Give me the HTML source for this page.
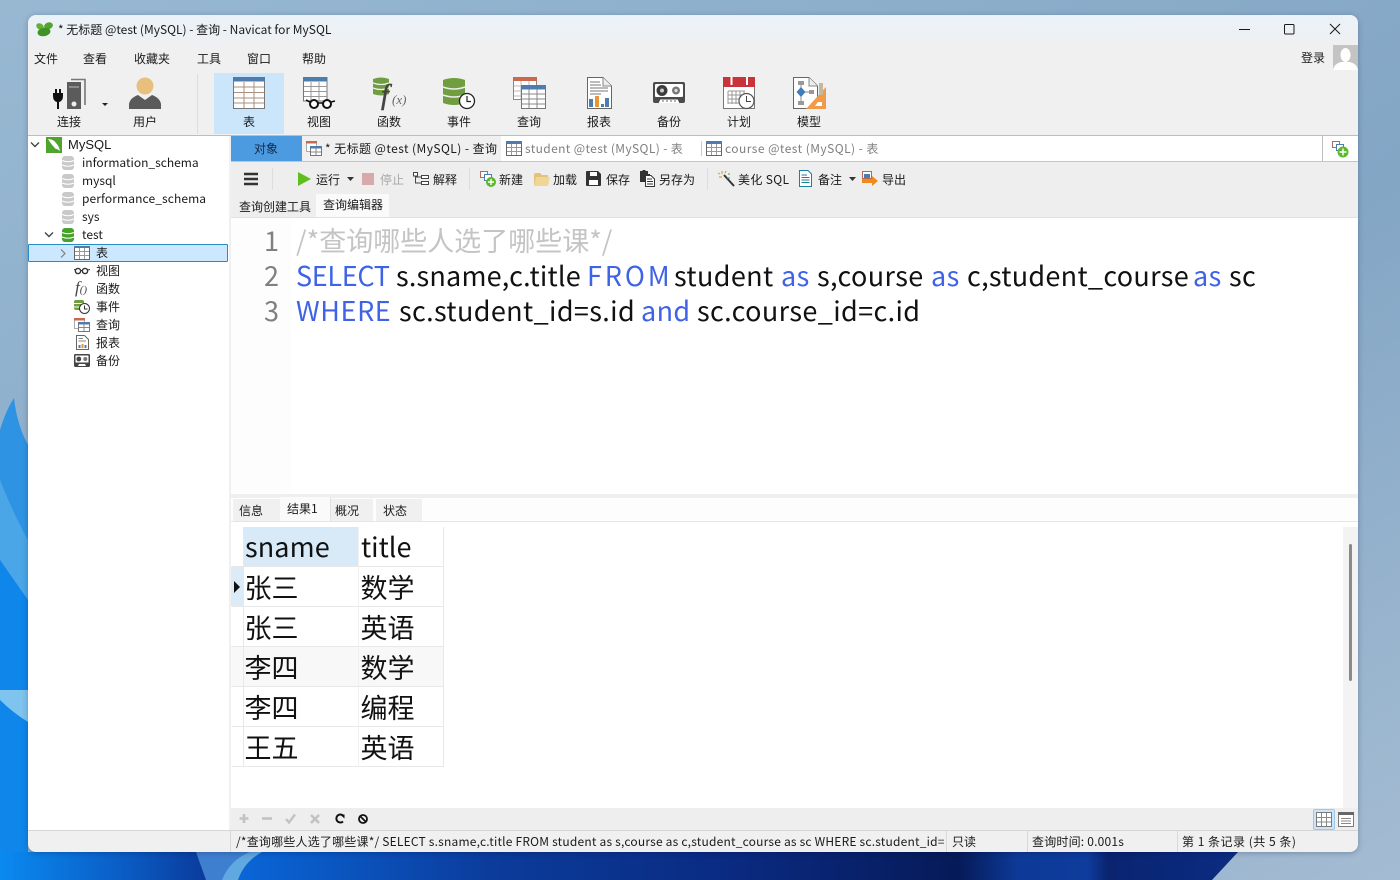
<!DOCTYPE html>
<html><head><meta charset="utf-8"><title>Navicat for MySQL</title>
<style>
html,body{margin:0;padding:0;width:1400px;height:880px;overflow:hidden}
body{position:relative;background:#8fb0cc;font-family:"Liberation Sans","Noto Sans CJK SC",sans-serif;color:#111}
.a{position:absolute}
.t{position:absolute;white-space:nowrap;font-size:12px;line-height:16px;font-family:"Noto Sans CJK SC","Liberation Sans",sans-serif;color:#1a1a1a}
.c{transform:translateX(-50%)}
svg{position:absolute;overflow:visible}
.code{position:absolute;white-space:pre;font-family:"Noto Sans CJK SC",sans-serif;font-size:27px;line-height:35px;color:#111;letter-spacing:.37px}
.k{color:#3f63e6}
.l2{top:257px}
.l3{top:292px}
.n{position:absolute;font-family:"Noto Sans CJK SC",sans-serif;font-size:27px;line-height:35px;color:#808080}
.g{position:absolute;font-family:"Noto Sans CJK SC",sans-serif;font-size:27px;line-height:40px;color:#111;white-space:nowrap}
</style></head><body>
<!-- wallpaper -->
<svg style="left:0;top:0" width="1400" height="880" viewBox="0 0 1400 880">
<defs>
<linearGradient id="bg" x1="0" y1="0" x2="1" y2="1"><stop offset="0" stop-color="#98b8d2"/><stop offset=".6" stop-color="#83a6c5"/><stop offset="1" stop-color="#a4bcd3"/></linearGradient>
<linearGradient id="bl" x1="0" y1="0" x2="1" y2="0"><stop offset="0" stop-color="#0a8af0"/><stop offset=".6" stop-color="#0a5cc4"/><stop offset="1" stop-color="#0a3a9a"/></linearGradient>
<linearGradient id="st" x1="0" y1="0" x2="1" y2="0"><stop offset="0" stop-color="#0a66d8"/><stop offset=".25" stop-color="#0b3c9c"/><stop offset=".5" stop-color="#0a2a80"/><stop offset=".72" stop-color="#061a58"/><stop offset=".78" stop-color="#0d3a98"/><stop offset=".85" stop-color="#0e3c9c"/><stop offset=".87" stop-color="#0a2470"/><stop offset="1" stop-color="#0b2c82"/></linearGradient>
</defs>
<rect width="1400" height="880" fill="url(#bg)"/>
<path d="M14 398 Q17 425 28 445 V560 H28 Q10 510 0 480 V430Q6 410 14 398Z" fill="#2f93e4"/>
<path d="M0 480 Q14 515 28 540 V720 H0Z" fill="#4aa6e6"/>
<path d="M0 560 L28 600 V880 H0Z" fill="#0f86ea"/>
<path d="M0 700 Q12 712 28 722 V690 H0Z" fill="#7ec4ee"/>
<path d="M0 852 H200 L208 880 H0Z" fill="url(#bl)"/>
<path d="M196 852 L206 880 H224 Q232 862 250 852Z" fill="#3f7fd0"/>
<path d="M222 880 Q230 860 250 852 H262 Q244 862 238 880Z" fill="#5fa8e0"/>
<path d="M238 880 Q244 862 262 852 H1238 L1212 880Z" fill="url(#st)"/>
</svg>

<!-- window -->
<div class="a" style="left:28px;top:15px;width:1330px;height:837px;background:#f0f0f0;border-radius:8px;overflow:hidden;box-shadow:0 1px 6px rgba(0,0,40,.25)">
  <div class="a" style="left:0;top:0;width:1330px;height:34px;background:linear-gradient(#eaf2f9,#f0f0f0)"></div>
</div>

<!-- title -->
<svg style="left:36px;top:22px" width="17" height="15" viewBox="0 0 17 15"><ellipse cx="12.5" cy="3.8" rx="4.5" ry="3.4" fill="#54a32e" transform="rotate(-20 12.5 3.8)"/><ellipse cx="4" cy="4.5" rx="4" ry="3" fill="#62b034" transform="rotate(30 4 4.5)"/><ellipse cx="8" cy="10" rx="6.5" ry="4.2" fill="#3f9325" transform="rotate(-10 8 10)"/></svg>
<div class="t" style="left:58px;top:22px">* 无标题 @test (MySQL) - 查询 - Navicat for MySQL</div>
<svg style="left:1239px;top:24px" width="110" height="12" viewBox="0 0 110 12" fill="none" stroke="#1a1a1a" stroke-width="1"><path d="M0 5.5H11"/><rect x="45.5" y=".5" width="9.5" height="9.5" rx="1"/><path d="M91 0L101 10M101 0L91 10"/></svg>

<!-- menu -->
<div class="t" style="left:34px;top:51px">文件</div>
<div class="t" style="left:83px;top:51px">查看</div>
<div class="t" style="left:134px;top:51px">收藏夹</div>
<div class="t" style="left:197px;top:51px">工具</div>
<div class="t" style="left:247px;top:51px">窗口</div>
<div class="t" style="left:302px;top:51px">帮助</div>
<div class="t" style="left:1301px;top:50px">登录</div>
<div class="a" style="left:1333px;top:45px;width:25px;height:25px;background:#c4c4c4;overflow:hidden"><svg style="left:0;top:0" width="25" height="25" viewBox="0 0 25 25"><ellipse cx="12.5" cy="10" rx="5" ry="7" fill="#fff"/><path d="M0 25Q1 19 8 17H17Q24 19 25 25Z" fill="#fff"/></svg></div>

<!-- main toolbar -->
<div class="a" style="left:214px;top:73px;width:70px;height:61px;background:#cbe6fb"></div>
<div class="a" style="left:197px;top:74px;width:1px;height:60px;background:#ddd"></div>
<svg style="left:52px;top:77px" width="60" height="33" viewBox="0 0 60 33">
<path d="M4 12V16M8 12V16" stroke="#111" stroke-width="2"/><path d="M1 16H11V19Q11 24 7 25V32H5V25Q1 24 1 19Z" fill="#111"/>
<rect x="15" y="5" width="14" height="27" fill="#5b5b5b"/><path d="M19 2.5H33V28" fill="none" stroke="#777" stroke-width="1.6"/><path d="M17 10H27" stroke="#bbb"/><circle cx="22" cy="27" r="2.5" fill="#eee"/>
<path d="M50 26H56L53 29Z" fill="#222"/></svg>
<svg style="left:129px;top:77px" width="32" height="32" viewBox="0 0 32 32"><circle cx="16" cy="9" r="8.5" fill="#e8bf7d"/><path d="M0 32V27Q1 21 9 18L16 23L23 18Q31 21 32 27V32Z" fill="#5a5a5a"/></svg>
<svg style="left:233px;top:77px" width="32" height="32" viewBox="0 0 32 32"><rect x=".5" y=".5" width="31" height="31" fill="#fff" stroke="#777"/><rect width="32" height="4.5" fill="#4f7cad"/><path d="M1 10H31M1 15.5H31M1 21H31M1 26H31M11 5V31M21 5V31" stroke="#a98f7d"/></svg>
<svg style="left:303px;top:77px" width="33" height="33" viewBox="0 0 33 33"><path d="M.5 .5H24V24H.5Z" fill="#fff" stroke="#777"/><rect width="24" height="4.5" fill="#4f7cad"/><path d="M1 9.5H24M1 14.5H24M1 19.5H24M8 5V24M16 5V24" stroke="#999"/><circle cx="11" cy="27" r="4" fill="#fff" stroke="#111" stroke-width="2"/><circle cx="24" cy="27" r="4" fill="#fff" stroke="#111" stroke-width="2"/><path d="M15 26H20M28 25L32 24M7 25L3 23" stroke="#111" stroke-width="1.6"/></svg>
<svg style="left:373px;top:77px" width="33" height="32" viewBox="0 0 33 32"><path d="M0 2Q8-1 16 2V17Q8 20 0 17Z" fill="#6f9d3f"/><path d="M0 6Q8 9 16 6M0 11Q8 14 16 11" stroke="#eee" fill="none" stroke-width="1.3"/><text x="8" y="27" font-family="Liberation Serif,serif" font-style="italic" font-size="28" fill="#444" stroke="#444" stroke-width=".5">f</text><text x="19" y="27" font-family="Liberation Serif,serif" font-style="italic" font-size="13" fill="#666">(x)</text></svg>
<svg style="left:443px;top:77px" width="33" height="33" viewBox="0 0 33 33"><path d="M0 3Q11-1 22 3V26Q11 30 0 26Z" fill="#6f9d3f"/><path d="M0 10Q11 14 22 10M0 18Q11 22 22 18" stroke="#eee" fill="none" stroke-width="1.6"/><circle cx="24" cy="24" r="7.5" fill="#fff" stroke="#222" stroke-width="1.3"/><path d="M24 19V24.5H28" stroke="#222" fill="none" stroke-width="1.2"/></svg>
<svg style="left:513px;top:77px" width="33" height="33" viewBox="0 0 33 33"><rect x=".5" y=".5" width="23" height="22" fill="#fff" stroke="#888"/><rect width="24" height="4" fill="#c96a4e"/><path d="M1 9H24M1 14H24M1 19H24M8 4V22M16 4V22" stroke="#bbb"/><rect x="8.5" y="8.5" width="24" height="23" fill="#fff" stroke="#777"/><rect x="8" y="8" width="25" height="4.5" fill="#4f7cad"/><path d="M9 17H32M9 22H32M9 27H32M16 12V31M24 12V31" stroke="#888"/></svg>
<svg style="left:587px;top:77px" width="25" height="32" viewBox="0 0 25 32"><path d="M.5 .5H16L24.5 9V31.5H.5Z" fill="#fff" stroke="#666"/><path d="M16 .5V9H24.5" fill="#eee" stroke="#888"/><path d="M3 5H13M3 8H14M3 11H21M3 14H21M3 17H14" stroke="#777"/><rect x="2" y="22" width="4" height="8" fill="#4f7cad"/><rect x="8" y="19" width="4" height="11" fill="#e8953a"/><rect x="14" y="27" width="3" height="3" fill="#4f7cad"/><rect x="18" y="21" width="4" height="9" fill="#4f7cad"/></svg>
<svg style="left:653px;top:82px" width="32" height="22" viewBox="0 0 32 22"><rect width="32" height="21" rx="2" fill="#4b4b4b"/><rect x="2" y="2" width="28" height="13" rx="1" fill="#fff"/><circle cx="9" cy="8.5" r="5.5" fill="#3c3c3c"/><circle cx="9" cy="8.5" r="2" fill="#ccc"/><circle cx="23" cy="8.5" r="4" fill="#777"/><circle cx="23" cy="8.5" r="1.6" fill="#ddd"/><path d="M5 21L7 17H25L27 21" fill="#fff" stroke="#444"/><path d="M9 19H23" stroke="#666" stroke-dasharray="2 2"/></svg>
<svg style="left:723px;top:77px" width="33" height="32" viewBox="0 0 33 32"><rect x=".5" y=".5" width="31" height="31" fill="#fff" stroke="#777"/><rect width="32" height="10" fill="#c9343a"/><rect x="7.5" y="0" width="2" height="8" fill="#fff"/><rect x="23" y="0" width="2" height="8" fill="#fff"/><path d="M5 14H22M5 18H19M5 22H17M5 26H17M5 14V27M9 14V27M13 14V27M17 14V27M21 14V20" stroke="#999"/><circle cx="23.5" cy="24" r="7.5" fill="#fff" stroke="#555" stroke-width="1.2"/><path d="M23.5 19V24.5H28" stroke="#444" fill="none"/></svg>
<svg style="left:793px;top:77px" width="33" height="32" viewBox="0 0 33 32"><path d="M.5 .5H16L24.5 9V31.5H.5Z" fill="#fff" stroke="#666"/><path d="M16 .5V9H24.5" fill="#eee" stroke="#888"/><rect x="5" y="4" width="6" height="4" fill="#999"/><rect x="5" y="24" width="6" height="4" fill="#999"/><rect x="16" y="13" width="5" height="4" fill="#999"/><path d="M8 8V24M11 15H16" stroke="#888"/><path d="M8 10L12.5 15L8 20L3.5 15Z" fill="#3f7cba"/><path d="M13 32L33 10V32Z" fill="#ef9b4a"/><path d="M25 25H29V29H22Z" fill="#fff"/><rect x="26" y="6" width="4" height="12" fill="#c9b79a"/></svg>
<div class="t c" style="left:69px;top:114px">连接</div>
<div class="t c" style="left:145px;top:114px">用户</div>
<div class="t c" style="left:249px;top:114px">表</div>
<div class="t c" style="left:319px;top:114px">视图</div>
<div class="t c" style="left:389px;top:114px">函数</div>
<div class="t c" style="left:459px;top:114px">事件</div>
<div class="t c" style="left:529px;top:114px">查询</div>
<div class="t c" style="left:599px;top:114px">报表</div>
<div class="t c" style="left:669px;top:114px">备份</div>
<div class="t c" style="left:739px;top:114px">计划</div>
<div class="t c" style="left:809px;top:114px">模型</div>
<div class="a" style="left:28px;top:135px;width:1330px;height:1px;background:#bdbdbd"></div>

<!-- tree -->
<div class="a" style="left:28px;top:136px;width:201px;height:694px;background:#fff"></div>
<div class="a" style="left:229px;top:136px;width:2px;height:694px;background:#f0f0f0"></div>
<svg style="left:30px;top:141px" width="10" height="8" viewBox="0 0 10 8"><path d="M1 1.5L5 5.5L9 1.5" fill="none" stroke="#444" stroke-width="1.4"/></svg>
<svg style="left:46px;top:137px" width="16" height="16" viewBox="0 0 16 16"><rect width="16" height="16" fill="#4fa52b"/><path d="M2 2Q7 2 10 6Q13 9 14 14L11 12Q9 12 8 10Q5 7 2 2Z" fill="#fff"/></svg>
<div class="t" style="left:68px;top:137px;font-family:'Liberation Sans',sans-serif;font-size:13px">MySQL</div>
<svg width="0" height="0"><defs>
<g id="db"><rect x="0" y="0" width="12" height="14" rx="3" fill="currentColor"/><path d="M0 4.5Q6 7 12 4.5M0 9Q6 11.5 12 9" stroke="#fff" fill="none"/></g>
</defs></svg>
<svg style="left:62px;top:156px;color:#c9c9c9" width="12" height="14"><use href="#db"/></svg>
<svg style="left:62px;top:174px;color:#c9c9c9" width="12" height="14"><use href="#db"/></svg>
<svg style="left:62px;top:192px;color:#c9c9c9" width="12" height="14"><use href="#db"/></svg>
<svg style="left:62px;top:210px;color:#c9c9c9" width="12" height="14"><use href="#db"/></svg>
<svg style="left:62px;top:228px;color:#46a32a" width="12" height="14"><use href="#db"/></svg>
<div class="t" style="left:82px;top:155px">information_schema</div>
<div class="t" style="left:82px;top:173px">mysql</div>
<div class="t" style="left:82px;top:191px;letter-spacing:.1px">performance_schema</div>
<div class="t" style="left:82px;top:209px">sys</div>
<div class="t" style="left:82px;top:227px">test</div>
<svg style="left:44px;top:231px" width="10" height="8" viewBox="0 0 10 8"><path d="M1 1.5L5 5.5L9 1.5" fill="none" stroke="#444" stroke-width="1.4"/></svg>
<div class="a" style="left:28px;top:244px;width:198px;height:16px;background:#cce8ff;border:1px solid #2a8ac4;border-radius:1px"></div>
<svg style="left:60px;top:249px" width="6" height="9" viewBox="0 0 6 9"><path d="M1 .5L5 4.5L1 8.5" fill="none" stroke="#888" stroke-width="1.3"/></svg>
<svg style="left:74px;top:246px" width="16" height="14" viewBox="0 0 16 14"><rect x=".5" y=".5" width="15" height="13" fill="#fff" stroke="#666"/><rect x="0" y="0" width="16" height="2" fill="#4f7cad"/><path d="M1 5.5H15M1 9.5H15M5.5 2V13M10.5 2V13" stroke="#999"/></svg>
<svg style="left:74px;top:267px" width="16" height="8" viewBox="0 0 16 8"><circle cx="4" cy="4" r="2.6" fill="none" stroke="#333" stroke-width="1.4"/><circle cx="11" cy="4" r="2.6" fill="none" stroke="#333" stroke-width="1.4"/><path d="M6.5 3.5H8.5M13.5 3L16 2.5M1.5 3L0 2.5" stroke="#333"/></svg>
<div class="t" style="left:75px;top:280px;font-family:'Liberation Serif',serif;font-style:italic;font-size:17px;color:#444">f<span style="font-size:11px">()</span></div>
<svg style="left:74px;top:300px" width="16" height="14" viewBox="0 0 16 14"><rect width="10" height="10" rx="2" fill="#6f9d3f"/><path d="M0 3.5H10M0 7H10" stroke="#fff"/><circle cx="10.5" cy="8.5" r="5" fill="#fff" stroke="#333"/><path d="M10.5 5.5V9H13.5" stroke="#333" fill="none"/></svg>
<svg style="left:74px;top:318px" width="16" height="14" viewBox="0 0 16 14"><rect x=".5" y=".5" width="10" height="10" fill="#fff" stroke="#aaa"/><rect width="11" height="2.5" fill="#c96a4e"/><rect x="4.5" y="4.5" width="11" height="9" fill="#fff" stroke="#777"/><rect x="4" y="4" width="12" height="2.5" fill="#4f7cad"/><path d="M5 9.5H15M10 6V13" stroke="#888"/></svg>
<svg style="left:76px;top:335px" width="13" height="15" viewBox="0 0 13 15"><path d="M.5 .5H8.5L12.5 4.5V14.5H.5Z" fill="#fff" stroke="#666"/><path d="M2.5 3.5H7M2.5 6H10" stroke="#888"/><rect x="2.5" y="10" width="2" height="3" fill="#4f7cad"/><rect x="5.5" y="9" width="2" height="4" fill="#e8953a"/><rect x="8.5" y="10" width="2" height="3" fill="#4f7cad"/></svg>
<svg style="left:74px;top:354px" width="16" height="13" viewBox="0 0 16 13"><rect width="16" height="13" rx="1.5" fill="#444"/><rect x="1.5" y="1.5" width="13" height="7" fill="#fff"/><circle cx="4.8" cy="5" r="2.4" fill="#444"/><circle cx="11.3" cy="5" r="2" fill="#777"/><path d="M4 12L5 10H11L12 12" fill="#fff"/></svg>
<div class="t" style="left:96px;top:245px">表</div>
<div class="t" style="left:96px;top:263px">视图</div>
<div class="t" style="left:96px;top:281px">函数</div>
<div class="t" style="left:96px;top:299px">事件</div>
<div class="t" style="left:96px;top:317px">查询</div>
<div class="t" style="left:96px;top:335px">报表</div>
<div class="t" style="left:96px;top:353px">备份</div>

<!-- tab bar -->
<div class="a" style="left:501px;top:136px;width:857px;height:25px;background:#fff"></div>
<div class="a" style="left:231px;top:136px;width:71px;height:25px;background:#4c9be0"></div>
<div class="a" style="left:231px;top:161px;width:1127px;height:1px;background:#c4c4c4"></div>
<div class="a" style="left:701px;top:141px;width:1px;height:15px;background:#ccc"></div>
<div class="a" style="left:1322px;top:136px;width:1px;height:25px;background:#bdbdbd"></div>
<div class="t c" style="left:266px;top:141px;color:#102a4a">对象</div>
<svg style="left:306px;top:141px" width="16" height="15" viewBox="0 0 16 15"><rect x=".5" y=".5" width="10" height="10" fill="#fff" stroke="#aaa"/><rect width="11" height="2.5" fill="#c96a4e"/><rect x="4.5" y="5.5" width="11" height="9" fill="#fff" stroke="#777"/><rect x="4" y="5" width="12" height="2.5" fill="#4f7cad"/><path d="M5 11H15M10 7V14" stroke="#888"/></svg>
<div class="t" style="left:325px;top:141px;letter-spacing:.43px">* 无标题 @test (MySQL) - 查询</div>
<svg style="left:506px;top:141px" width="16" height="15" viewBox="0 0 16 15"><rect x=".5" y=".5" width="15" height="14" fill="#fff" stroke="#666"/><rect width="16" height="3" fill="#4f7cad"/><path d="M1 6.5H15M1 10.5H15M5.5 3V14M10.5 3V14" stroke="#999"/></svg>
<div class="t" style="left:525px;top:141px;color:#808080;letter-spacing:.37px">student @test (MySQL) - 表</div>
<svg style="left:706px;top:141px" width="16" height="15" viewBox="0 0 16 15"><rect x=".5" y=".5" width="15" height="14" fill="#fff" stroke="#666"/><rect width="16" height="3" fill="#4f7cad"/><path d="M1 6.5H15M1 10.5H15M5.5 3V14M10.5 3V14" stroke="#999"/></svg>
<div class="t" style="left:725px;top:141px;color:#808080;letter-spacing:.45px">course @test (MySQL) - 表</div>
<svg style="left:1332px;top:141px" width="17" height="16" viewBox="0 0 17 16"><rect x=".5" y=".5" width="7" height="6" fill="#fff" stroke="#b06a5a"/><rect x="4.5" y="3.5" width="7" height="6" fill="#fff" stroke="#4f7cad"/><circle cx="11" cy="11" r="5.5" fill="#5cb82c"/><path d="M11 7.5V14.5M7.5 11H14.5" stroke="#fff" stroke-width="1.4"/></svg>

<!-- query toolbar -->
<div class="a" style="left:231px;top:162px;width:1127px;height:33px;background:#eeeeee"></div>
<svg style="left:244px;top:172px" width="14" height="14" viewBox="0 0 14 14"><path d="M0 2H14M0 7H14M0 12H14" stroke="#333" stroke-width="2.6"/></svg>
<div class="a" style="left:272px;top:168px;width:1px;height:22px;background:#ddd"></div>
<svg style="left:298px;top:172px" width="13" height="14" viewBox="0 0 13 14"><path d="M0 0L13 7L0 14Z" fill="#5fbf1c"/></svg>
<div class="t" style="left:316px;top:172px">运行</div>
<svg style="left:347px;top:177px" width="7" height="4" viewBox="0 0 7 4"><path d="M0 0H7L3.5 4Z" fill="#333"/></svg>
<div class="a" style="left:362px;top:173px;width:12px;height:12px;background:#d9a9a9"></div>
<div class="t" style="left:380px;top:172px;color:#a8a8a8">停止</div>
<svg style="left:413px;top:172px" width="16" height="14" viewBox="0 0 16 14" fill="#fff" stroke="#444"><rect x=".5" y=".5" width="4" height="3.5"/><rect x="8.5" y="3.5" width="7" height="3"/><rect x="8.5" y="9.5" width="7" height="3"/><path d="M2.5 4V11H8.5M2.5 5H8.5" fill="none"/></svg>
<div class="t" style="left:433px;top:172px">解释</div>
<div class="a" style="left:469px;top:168px;width:1px;height:22px;background:#ddd"></div>
<svg style="left:480px;top:171px" width="17" height="16" viewBox="0 0 17 16"><rect x=".5" y=".5" width="7" height="6" fill="#fff" stroke="#b06a5a"/><rect x="4.5" y="3.5" width="7" height="6" fill="#fff" stroke="#4f7cad"/><circle cx="11" cy="11" r="5" fill="#5cb82c"/><path d="M11 8V14M8 11H14" stroke="#fff" stroke-width="1.4"/></svg>
<div class="t" style="left:499px;top:172px">新建</div>
<svg style="left:534px;top:173px" width="16" height="13" viewBox="0 0 16 13"><path d="M0 2Q0 0 2 0H6L8 2H14V12H0Z" fill="#e4c27a"/><path d="M2 4H16L14 13H0Z" fill="#f0d696"/></svg>
<div class="t" style="left:553px;top:172px">加载</div>
<svg style="left:586px;top:171px" width="15" height="15" viewBox="0 0 15 15"><path d="M0 1Q0 0 1 0H12L15 3V14Q15 15 14 15H1Q0 15 0 14Z" fill="#333"/><rect x="4" y="1" width="7" height="4" fill="#fff"/><rect x="3" y="9" width="9" height="5" fill="#fff"/></svg>
<div class="t" style="left:606px;top:172px">保存</div>
<svg style="left:639px;top:170px" width="16" height="17" viewBox="0 0 16 17"><path d="M1 1H9V4H11V12H1Z" fill="#333"/><rect x="3.5" y="0" width="3" height="3" fill="#333"/><path d="M6.5 5.5H12L15.5 9V16.5H6.5Z" fill="#fff" stroke="#333"/><path d="M8 9H13M8 11.5H14M8 14H14" stroke="#333"/></svg>
<div class="t" style="left:659px;top:172px">另存为</div>
<div class="a" style="left:707px;top:168px;width:1px;height:22px;background:#ddd"></div>
<svg style="left:718px;top:170px" width="17" height="17" viewBox="0 0 17 17"><path d="M6 5L16 16" stroke="#333" stroke-width="2"/><path d="M4 1V4M1 7H4M8 1L7 3M0 3L2 4" stroke="#e8a030" stroke-width="1.2"/><path d="M11 3V5M9 8H12" stroke="#4aa050"/></svg>
<div class="t" style="left:738px;top:172px;letter-spacing:.35px">美化 SQL</div>
<svg style="left:799px;top:170px" width="13" height="17" viewBox="0 0 13 17"><path d="M.5 .5H9L12.5 4V16.5H.5Z" fill="#fff" stroke="#1d7f9e"/><path d="M2.5 5H8M2.5 7.5H10.5M2.5 10H10.5M2.5 12.5H10.5" stroke="#1d7f9e"/></svg>
<div class="t" style="left:818px;top:172px">备注</div>
<svg style="left:849px;top:177px" width="7" height="4" viewBox="0 0 7 4"><path d="M0 0H7L3.5 4Z" fill="#333"/></svg>
<svg style="left:862px;top:171px" width="16" height="16" viewBox="0 0 16 16"><rect x=".5" y=".5" width="9" height="7" fill="#fff" stroke="#b06a5a"/><rect x="2" y="3" width="6" height="4" fill="#4f7cad"/><path d="M0 9H10V6L16 11L10 16V13H0Z" fill="#f08a1c" transform="translate(0,-1)"/></svg>
<div class="t" style="left:882px;top:172px">导出</div>

<!-- sub tabs -->
<div class="a" style="left:231px;top:195px;width:1127px;height:23px;background:#eeeeee"></div>
<div class="a" style="left:316px;top:194px;width:73px;height:24px;background:#fafafa"></div>
<div class="a" style="left:231px;top:217px;width:1127px;height:1px;background:#e2e2e2"></div>
<div class="t" style="left:239px;top:199px">查询创建工具</div>
<div class="t" style="left:323px;top:197px">查询编辑器</div>

<!-- editor -->
<div class="a" style="left:231px;top:218px;width:1127px;height:276px;background:#fff"></div>
<div class="a" style="left:231px;top:218px;width:60px;height:276px;background:#fdfdfd"></div>
<div class="n" style="left:264px;top:222px">1</div>
<div class="n" style="left:264px;top:257px">2</div>
<div class="n" style="left:264px;top:292px">3</div>
<div class="code" style="left:296px;top:222px;color:#c4c4c4;letter-spacing:0">/*查询哪些人选了哪些课*/</div>
<div class="code l2 k" style="left:296px;letter-spacing:-.3px">SELECT</div>
<div class="code l2" style="left:396px;letter-spacing:.2px">s.sname,c.title</div>
<div class="code l2 k" style="left:587px;letter-spacing:2.9px">FROM</div>
<div class="code l2" style="left:674px">student</div>
<div class="code l2 k" style="left:781px">as</div>
<div class="code l2" style="left:817px">s,course</div>
<div class="code l2 k" style="left:931px">as</div>
<div class="code l2" style="left:967px;letter-spacing:.3px">c,student_course</div>
<div class="code l2 k" style="left:1193px">as</div>
<div class="code l2" style="left:1229px">sc</div>
<div class="code l3 k" style="left:296px;letter-spacing:.6px">WHERE</div>
<div class="code l3" style="left:399px">sc.student_id=s.id</div>
<div class="code l3 k" style="left:641px">and</div>
<div class="code l3" style="left:697px">sc.course_id=c.id</div>

<!-- splitter & result tabs -->
<div class="a" style="left:231px;top:494px;width:1127px;height:4px;background:#efefef"></div>
<div class="a" style="left:231px;top:498px;width:1127px;height:23px;background:#fdfdfd"></div>
<div class="a" style="left:233px;top:499px;width:47px;height:22px;background:#f0f0f0"></div>
<div class="a" style="left:280px;top:497px;width:50px;height:25px;background:#fafafa;border-right:1px solid #e2e2e2"></div>
<div class="a" style="left:331px;top:499px;width:42px;height:22px;background:#f0f0f0"></div>
<div class="a" style="left:376px;top:499px;width:46px;height:22px;background:#f0f0f0"></div>
<div class="a" style="left:231px;top:521px;width:1127px;height:1px;background:#e6e6e6"></div>
<div class="t" style="left:239px;top:503px">信息</div>
<div class="t" style="left:287px;top:501px">结果1</div>
<div class="t" style="left:335px;top:503px">概况</div>
<div class="t" style="left:383px;top:503px">状态</div>

<!-- grid -->
<div class="a" style="left:231px;top:522px;width:1127px;height:286px;background:#fff"></div>
<div class="a" style="left:1343px;top:527px;width:15px;height:281px;background:#f3f3f3"></div>
<div class="a" style="left:1349px;top:544px;width:3px;height:137px;background:#8a8a8a;border-radius:2px"></div>
<div class="a" style="left:243px;top:527px;width:115px;height:39px;background:#d8e9f8"></div>
<div class="a" style="left:231px;top:567px;width:12px;height:39px;background:#dcebf8"></div>
<div class="a" style="left:231px;top:646px;width:213px;height:40px;background:#f8f8f8"></div>
<svg style="left:0;top:0" width="450" height="770"><path d="M231.5 566.5H443.5M231.5 606.5H443.5M231.5 646.5H443.5M231.5 686.5H443.5M231.5 726.5H443.5M231.5 766.5H443.5M243.5 527V767M443.5 527V767" stroke="#e8e8e8" fill="none"/><path d="M358.5 527V767" stroke="#f0f0f0" fill="none"/><path d="M234 581L240 587L234 593Z" fill="#111"/></svg>
<div class="g" style="left:245px;top:526px;color:#111;letter-spacing:.1px">sname</div>
<div class="g" style="left:361px;top:526px">title</div>
<div class="g" style="left:244.5px;top:567px">张三</div><div class="g" style="left:360.5px;top:567px">数学</div>
<div class="g" style="left:244.5px;top:607px">张三</div><div class="g" style="left:360.5px;top:607px">英语</div>
<div class="g" style="left:244.5px;top:647px">李四</div><div class="g" style="left:360.5px;top:647px">数学</div>
<div class="g" style="left:244.5px;top:687px">李四</div><div class="g" style="left:360.5px;top:687px">编程</div>
<div class="g" style="left:244.5px;top:727px">王五</div><div class="g" style="left:360.5px;top:727px">英语</div>

<!-- bottom bar -->
<div class="a" style="left:231px;top:808px;width:1127px;height:22px;background:#eeeeee"></div>
<svg style="left:238px;top:813px" width="135" height="12" viewBox="0 0 135 12"><path d="M6 1V10M1.5 5.5H10.5" stroke="#c2c2c2" stroke-width="2.6"/><path d="M24 5.5H34" stroke="#c2c2c2" stroke-width="2.6"/><path d="M48 6L51 9.5L57 1.5" stroke="#c2c2c2" stroke-width="2.4" fill="none"/><path d="M73 2L81 10M81 2L73 10" stroke="#c2c2c2" stroke-width="2.6"/><path d="M105 2.5A4 4 0 1 0 105 8.5" stroke="#111" stroke-width="2" fill="none"/><path d="M102 1.5H106.5V5.5Z" fill="#111"/><circle cx="125" cy="6" r="4" fill="none" stroke="#111" stroke-width="1.8"/><path d="M122 3L128 9" stroke="#111" stroke-width="1.8"/></svg>
<div class="a" style="left:1313px;top:809px;width:20px;height:19px;background:#cde5fa;border:1px solid #9cc8ec;border-radius:2px"></div>
<svg style="left:1316px;top:812px" width="42" height="16" viewBox="0 0 42 16"><rect x=".5" y=".5" width="15" height="14" fill="#fff" stroke="#7a7a7a"/><path d="M1 5.5H15M1 10H15M5.5 1V14M10.5 1V14" stroke="#8a8a8a"/><rect x="22.5" y=".5" width="15" height="14" fill="#fff" stroke="#7a7a7a"/><rect x="22" y="0" width="16" height="3" fill="#666"/><path d="M25 6.5H35M25 9H35M25 11.5H35" stroke="#888"/></svg>

<!-- status bar -->
<div class="a" style="left:28px;top:830px;width:1330px;height:1px;background:#d6d6d6"></div>
<div class="a" style="left:230px;top:831px;width:1px;height:21px;background:#d9d9d9"></div>
<div class="a" style="left:946px;top:831px;width:1px;height:21px;background:#d9d9d9"></div>
<div class="a" style="left:1027px;top:831px;width:1px;height:21px;background:#d9d9d9"></div>
<div class="a" style="left:1177px;top:831px;width:1px;height:21px;background:#d9d9d9"></div>
<div class="t" style="left:236px;top:834px;width:709px;overflow:hidden;letter-spacing:.2px">/*查询哪些人选了哪些课*/ SELECT s.sname,c.title FROM student as s,course as c,student_course as sc WHERE sc.student_id=</div>
<div class="t" style="left:952px;top:834px">只读</div>
<div class="t" style="left:1032px;top:834px;letter-spacing:.2px">查询时间: 0.001s</div>
<div class="t" style="left:1182px;top:834px;letter-spacing:.5px">第 1 条记录 (共 5 条)</div>
</body></html>
